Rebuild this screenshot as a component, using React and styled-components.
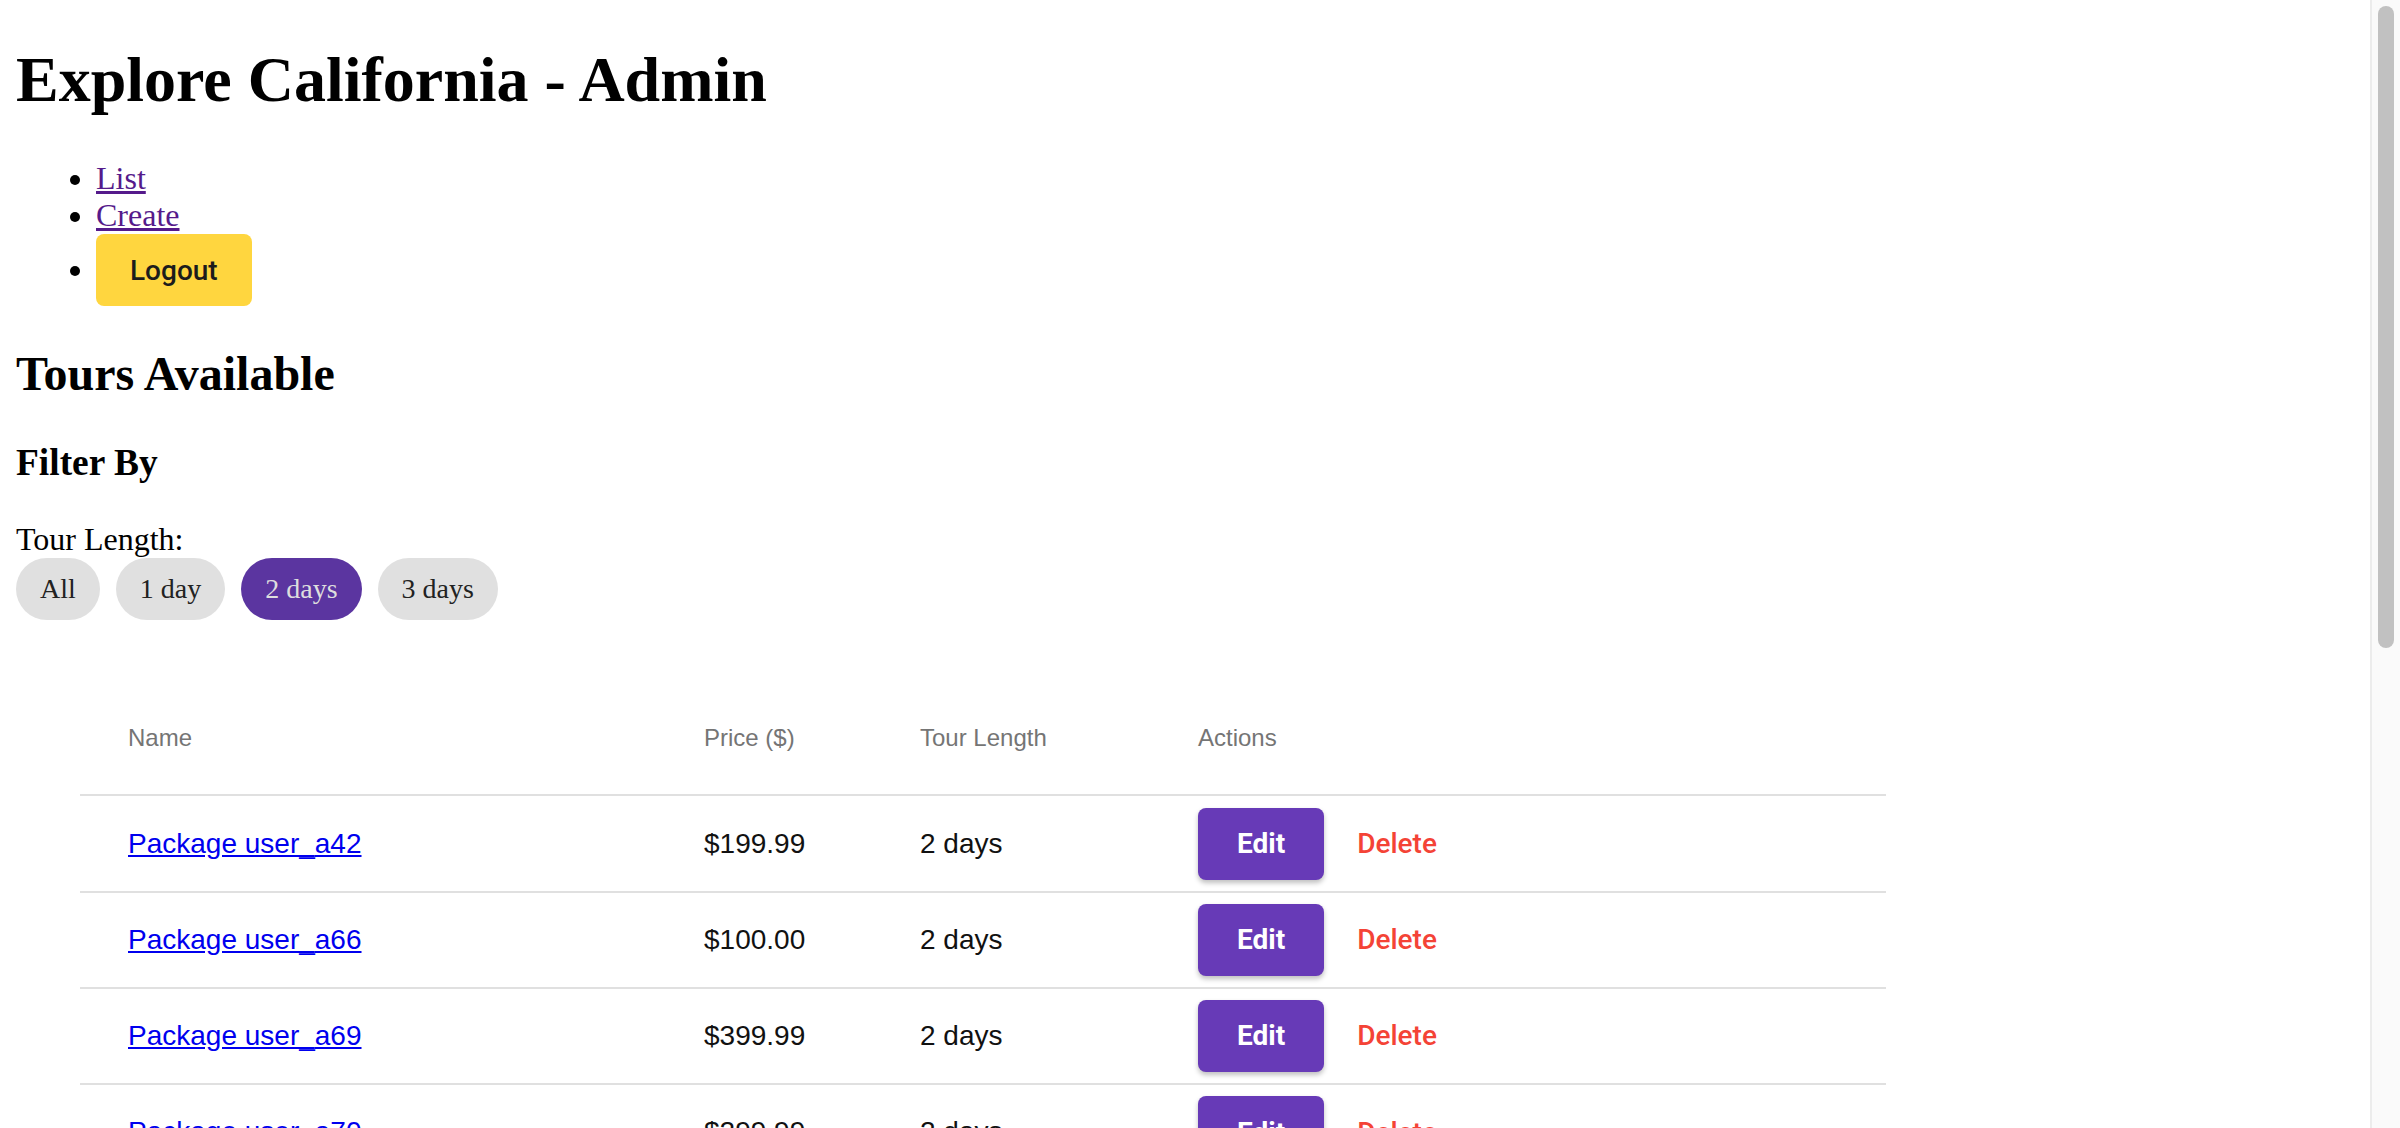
import React from 'react'
import styled, { createGlobalStyle } from 'styled-components'

const GlobalStyle = createGlobalStyle`
  body {
    margin: 0 16px 16px;
    font-family: "Liberation Serif", "Times New Roman", serif;
    font-size: 32px;
    color: #000;
    background: #fff;
  }
`

// browser scrollbar drawn over the right edge of the page
const ScrollRail = styled.div`
  position: fixed;
  top: 0;
  right: 0;
  width: 30px;
  height: 100vh;
  box-sizing: border-box;
  background: #fafafa;
  border-left: 2px solid #ececec;
  padding: 6px 6px 0 6px;
`
const ScrollThumb = styled.div`
  width: 16px;
  height: 642px;
  border-radius: 8px;
  background: #c1c1c1;
`

const Title = styled.h1`
  font-size: 64px;
  font-weight: bold;
  margin: 43px 0;
`
const Nav = styled.ul`
  margin: 32px 0;
  padding-left: 80px;
  list-style: disc;
`
const NavLink = styled.a`
  color: #551a8b;
  text-decoration: underline;
`
const SolidButton = styled.button`
  font-family: Roboto, "Liberation Sans", sans-serif;
  font-size: 28px;
  font-weight: ${p => p.weight || 500};
  border: none;
  border-radius: 8px;
  cursor: pointer;
  padding: 0 ${p => p.padX || 34}px;
  height: 72px;
  background: ${p => p.bg};
  color: ${p => p.fg};
  box-shadow: ${p => (p.raised ? '0 3px 5px rgba(0, 0, 0, 0.25)' : 'none')};
`
const SectionTitle = styled.h2`
  font-size: 48px;
  margin: 40px 0;
`
const SubTitle = styled.h3`
  font-size: 37.44px;
  margin: 37.44px 0;
`
const FilterLabel = styled.div`
  font-size: 32px;
`
const FilterRow = styled.div`
  display: flex;
  gap: 16px;
`
const Pill = styled.button`
  font-family: "Liberation Serif", "Times New Roman", serif;
  font-size: 28px;
  padding: 15px 24px;
  border: none;
  border-radius: 32px;
  background: ${p => (p.active ? '#5b35a0' : '#e0e0e0')};
  color: ${p => (p.active ? '#dedede' : '#222')};
  cursor: pointer;
`
const Table = styled.table`
  margin: 62px 0 0 64px;
  width: 1806px;
  border-collapse: collapse;
  table-layout: fixed;
  font-family: "Liberation Sans", Arial, sans-serif;
`
const Th = styled.th`
  height: 112px;
  padding: 0 0 0 48px;
  text-align: left;
  font-size: 24px;
  font-weight: normal;
  color: #757575;
  border-bottom: 2px solid #e0e0e0;
`
const Td = styled.td`
  height: 94.2px;
  padding: 0 0 0 48px;
  font-size: 28px;
  color: #111;
  border-bottom: 2px solid #e0e0e0;
`
const PackageLink = styled.a`
  color: #0000ee;
  text-decoration: underline;
`
const Actions = styled.div`
  display: flex;
  align-items: center;
  gap: 33px;
`
const DeleteButton = styled.button`
  font-family: Roboto, "Liberation Sans", sans-serif;
  font-size: 28px;
  font-weight: 500;
  color: #f44336;
  background: none;
  border: none;
  padding: 0;
  cursor: pointer;
`

const tours = [
  { id: 'a42', price: '199.99' },
  { id: 'a66', price: '100.00' },
  { id: 'a69', price: '399.99' },
  { id: 'a70', price: '299.99' },
  { id: 'a71', price: '149.99' },
  { id: 'a74', price: '250.00' },
  { id: 'a78', price: '199.99' },
  { id: 'a81', price: '349.99' },
  { id: 'a85', price: '120.00' },
  { id: 'a88', price: '299.99' },
  { id: 'a90', price: '175.00' },
  { id: 'a93', price: '399.99' },
]

const lengths = ['All', '1 day', '2 days', '3 days']

export default function App() {
  return (
    <>
      <GlobalStyle />
      <Title>Explore California - Admin</Title>
      <Nav>
        <li>
          <NavLink href="#list">List</NavLink>
        </li>
        <li>
          <NavLink href="#create">Create</NavLink>
        </li>
        <li>
          <SolidButton bg="#ffd63f" fg="#1c1c1c">
            Logout
          </SolidButton>
        </li>
      </Nav>
      <SectionTitle>Tours Available</SectionTitle>
      <SubTitle>Filter By</SubTitle>
      <FilterLabel>Tour Length:</FilterLabel>
      <FilterRow>
        {lengths.map(l => (
          <Pill key={l} active={l === '2 days'}>
            {l}
          </Pill>
        ))}
      </FilterRow>
      <Table>
        <colgroup>
          <col style={{ width: 576 }} />
          <col style={{ width: 216 }} />
          <col style={{ width: 278 }} />
          <col />
        </colgroup>
        <thead>
          <tr>
            <Th>Name</Th>
            <Th>Price ($)</Th>
            <Th>Tour Length</Th>
            <Th>Actions</Th>
          </tr>
        </thead>
        <tbody>
          {tours.map(t => (
            <tr key={t.id}>
              <Td>
                <PackageLink href={`#${t.id}`}>Package user_{t.id}</PackageLink>
              </Td>
              <Td>${t.price}</Td>
              <Td>2 days</Td>
              <Td>
                <Actions>
                  <SolidButton bg="#673ab7" fg="#fff" padX={39} weight={700} raised>
                    Edit
                  </SolidButton>
                  <DeleteButton>Delete</DeleteButton>
                </Actions>
              </Td>
            </tr>
          ))}
        </tbody>
      </Table>
      <ScrollRail>
        <ScrollThumb />
      </ScrollRail>
    </>
  )
}
